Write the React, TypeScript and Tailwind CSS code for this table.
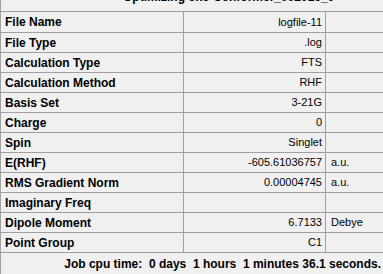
const rows: [string, string, string][] = [
  ["File Name", "logfile-11", ""],
  ["File Type", ".log", ""],
  ["Calculation Type", "FTS", ""],
  ["Calculation Method", "RHF", ""],
  ["Basis Set", "3-21G", ""],
  ["Charge", "0", ""],
  ["Spin", "Singlet", ""],
  ["E(RHF)", "-605.61036757", "a.u."],
  ["RMS Gradient Norm", "0.00004745", "a.u."],
  ["Imaginary Freq", "", ""],
  ["Dipole Moment", "6.7133", "Debye"],
  ["Point Group", "C1", ""],
];

export default function App() {
  return (
    <div
      className="w-[383px] h-[274px] overflow-hidden bg-[#f0f0f0] border-l border-[#a0a0a0] text-black"
      style={{ fontFamily: '"Liberation Sans", Arial, sans-serif' }}
    >
      {/* Title, cut off at the top */}
      <div className="h-[11px] overflow-hidden">
        <div className="-mt-[10px] pl-[122px] text-[12px] font-bold leading-[14px] whitespace-nowrap">
          Optimizing oxo Conformer_002016_0
        </div>
      </div>

      {/* Summary table */}
      <div className="grid grid-cols-[182px_142px_1fr] border-t border-b border-[#a0a0a0]">
        {rows.map(([label, value, unit], i) => (
          <div key={label} className="contents">
            <div
              className={`h-[20px] flex items-center pl-[4px] text-[12px] font-bold ${
                i > 0 ? "border-t border-[#a0a0a0]" : ""
              }`}
            >
              {label}
            </div>
            <div
              className={`h-[20px] flex items-center justify-end pr-[3px] text-[11px] border-l border-[#a0a0a0] ${
                i > 0 ? "border-t" : ""
              }`}
            >
              {value}
            </div>
            <div
              className={`h-[20px] flex items-center pl-[5px] text-[11px] border-l border-[#a0a0a0] ${
                i > 0 ? "border-t" : ""
              }`}
            >
              {unit}
            </div>
          </div>
        ))}
      </div>

      {/* Footer */}
      <div className="h-[22px] flex items-center justify-end pr-[2px] text-[12px] font-bold whitespace-pre">
        Job cpu time:  0 days  1 hours  1 minutes 36.1 seconds.
      </div>
    </div>
  );
}
